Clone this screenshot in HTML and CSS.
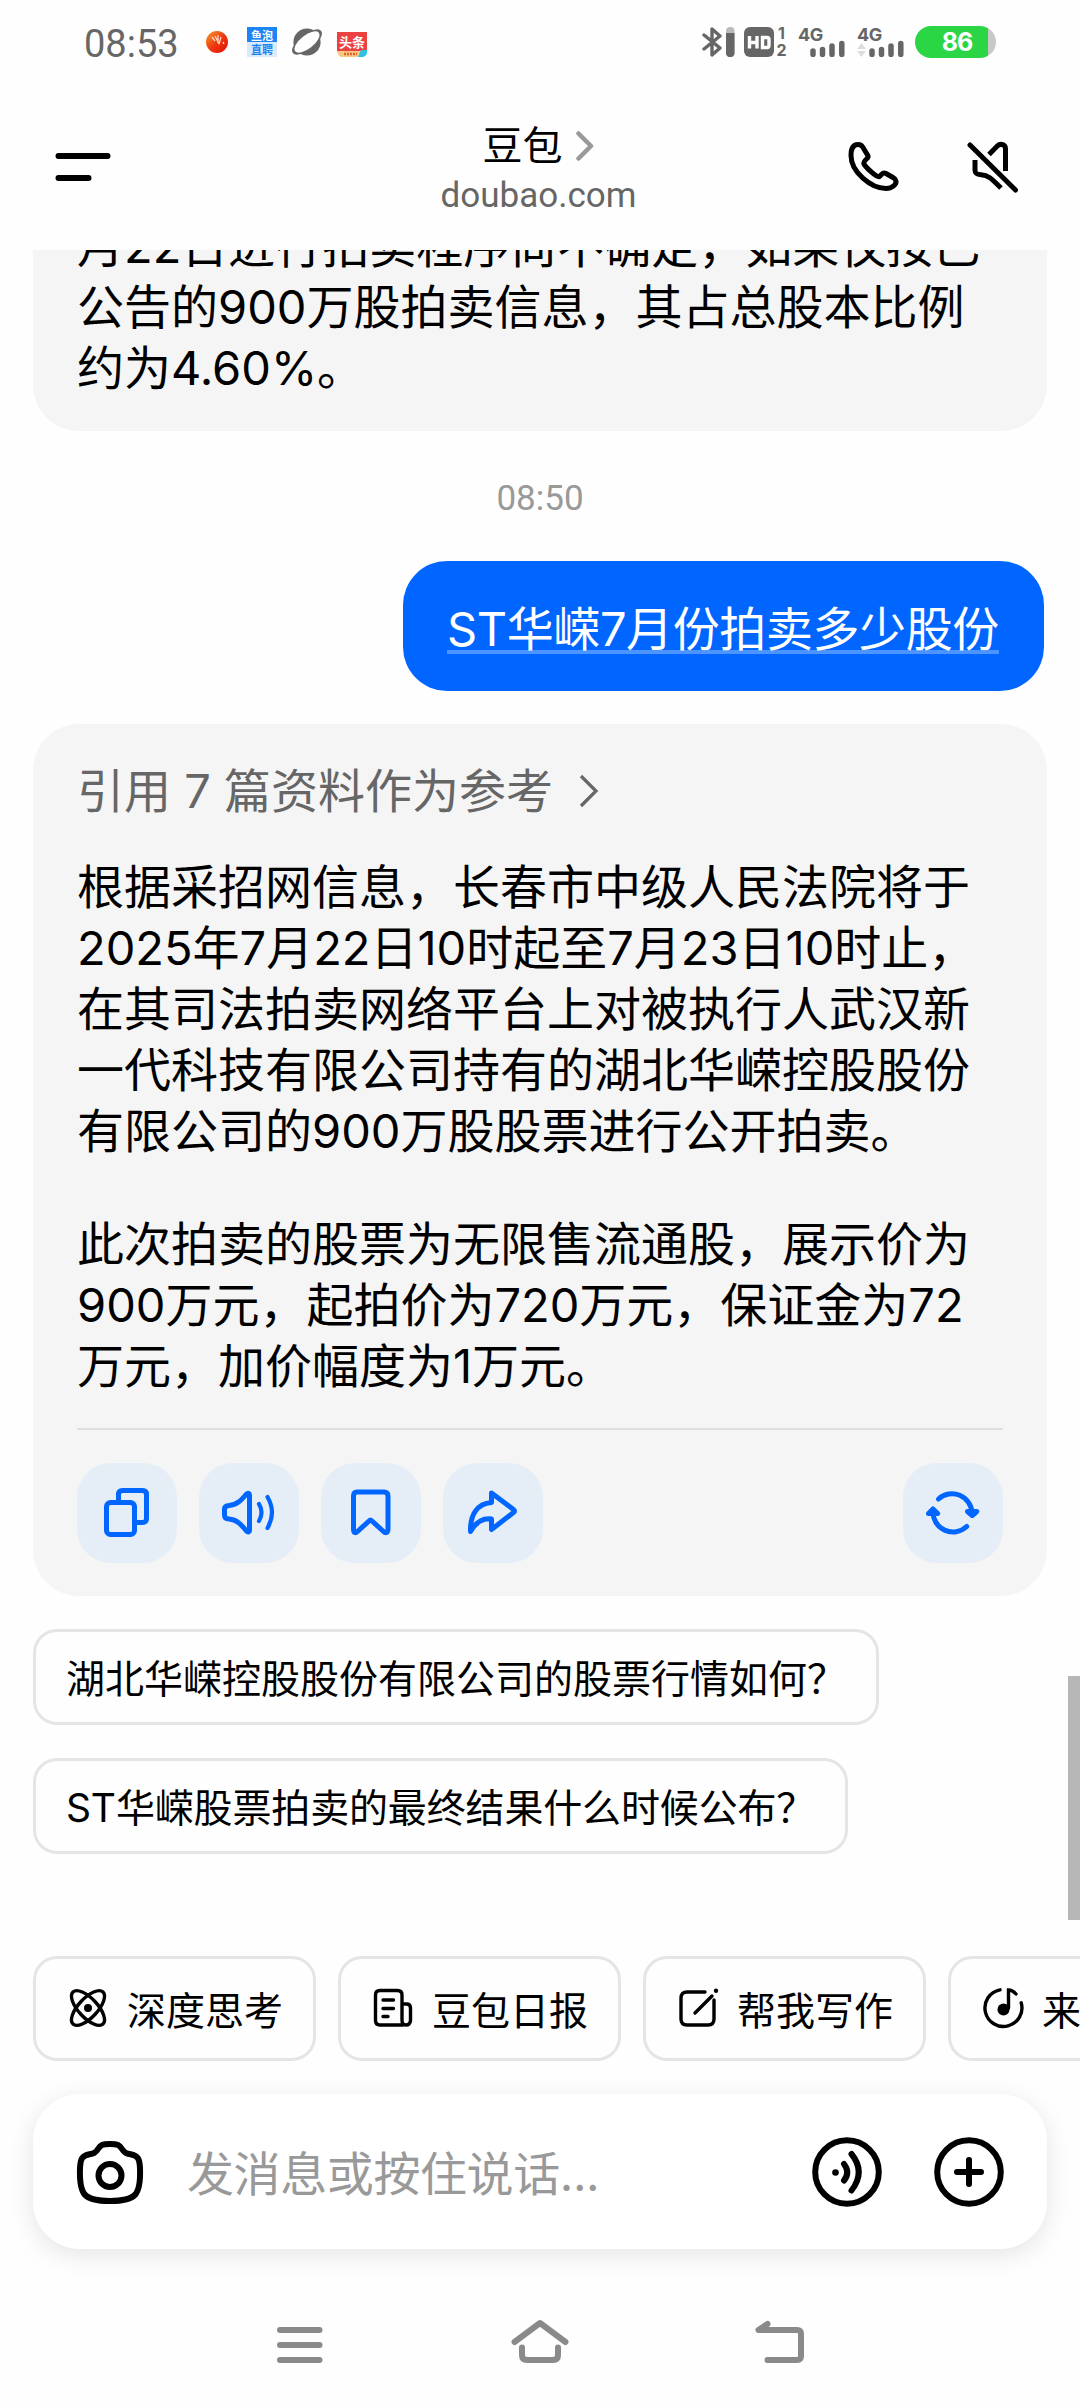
FILE: index.html
```html
<!DOCTYPE html>
<html lang="zh-CN">
<head>
    <meta charset="UTF-8">
    <meta name="viewport" content="width=device-width, initial-scale=1.0">
    <title>豆包</title>
    <link rel="stylesheet" href="styles.css">
</head>
<body>
    <div class="status-bar">
        <span class="clock">08:53</span>
        <div class="notices">
            <svg class="ball" width="22" height="22" viewBox="0 0 22 22">
                <defs>
                    <linearGradient id="ballFill" x1="0" y1="0" x2="1" y2="1">
                        <stop offset="0" stop-color="#f6a030"/>
                        <stop offset="0.5" stop-color="#ee3a10"/>
                        <stop offset="1" stop-color="#e60a00"/>
                    </linearGradient>
                </defs>
                <circle cx="11" cy="11" r="11" fill="url(#ballFill)"/>
                <path d="M6 6l3 4M9 5l4 8M12 4v8M15 6l-2 7M17 11l1 2" stroke="#ffd9c0" stroke-width="1.3"/>
            </svg>
            <svg class="yupao" width="30" height="30" viewBox="0 0 30 30">
                <rect width="30" height="15" fill="#1d84f3"/>
                <rect y="15" width="30" height="15" fill="#dbeafb"/>
                <text x="15" y="12.5" text-anchor="middle" font-size="11" font-weight="bold" fill="#fff">鱼泡</text>
                <text x="15" y="27" text-anchor="middle" font-size="11" font-weight="bold" fill="#1d84f3">直聘</text>
            </svg>
            <svg class="planet" width="30" height="28" viewBox="0 0 30 28">
                <circle cx="15" cy="14" r="13.6" fill="#666"/>
                <ellipse cx="15" cy="14" rx="18" ry="7.6" transform="rotate(-38 15 14)" fill="#666"/>
                <ellipse cx="15" cy="14" rx="15" ry="6.6" transform="rotate(-38 15 14)" fill="#fefefe"/>
            </svg>
            <svg class="toutiao" width="30" height="25" viewBox="0 0 30 25">
                <rect width="30" height="19" fill="#ec4141"/>
                <path d="M0 19h24l-2 6H4q-3-1-4-6z" fill="#f9c784"/>
                <path d="M24 18h6v3q-1 4-5 4h-4z" fill="#2cc3e0"/>
                <text x="15" y="14.5" text-anchor="middle" font-size="13" font-weight="bold" fill="#fff">头条</text>
                <path d="M7 22h13" stroke="#e0662e" stroke-width="2.4" stroke-dasharray="2 1"/>
            </svg>
        </div>
        <div class="system">
            <svg width="33" height="30" viewBox="0 0 33 30">
                <path d="M2 8l16 13-8 7V2l8 7L2 22" fill="none" stroke="#666" stroke-width="3.4" stroke-linejoin="round" stroke-linecap="round"/>
                <rect x="24" y="0" width="8.5" height="30" rx="4" fill="#bbb"/>
                <path d="M24 6h8.500v20a4 4 0 0 1-8.500 0z" fill="#666"/>
            </svg>
            <svg class="hd" width="30" height="30" viewBox="0 0 30 30">
                <rect width="30" height="30" rx="6" fill="#666"/>
                <path d="M5.500 9v12.500M13 9v12.500M5.500 15.500H13M18.500 10.500h4.500q2 0 2 2v6q0 2-2 2h-4.500z" fill="none" stroke="#fefefe" stroke-width="3.400"/>
            </svg>
            <div class="sims"><span>1</span><span>2</span></div>
            <div class="signal">
                <span>4G</span>
                <svg width="48" height="30" viewBox="0 0 48 30">
                    <path d="M15 24v3.500M24.500 22.500v5M34 19v8.500M43.800 16.500v11" stroke="#666" stroke-width="5.500" stroke-linecap="round"/>
                </svg>
            </div>
            <div class="signal">
                <span>4G</span>
                <svg width="48" height="30" viewBox="0 0 48 30">
                    <path d="M0 22l4.500-6 4.500 6zM0 24l4.500 6 4.500-6z" fill="#ddd"/>
                    <path d="M15 24v3.500M24.500 22.500v5M34 19v8.500M43.800 16.500v11" stroke="#666" stroke-width="5.500" stroke-linecap="round"/>
                </svg>
            </div>
            <div class="battery">86</div>
        </div>
    </div>

    <header>
        <svg class="menu" width="56" height="30" viewBox="0 0 56 30">
            <path d="M3.500 4h49M3.500 26h30" stroke="#000" stroke-width="6" stroke-linecap="round"/>
        </svg>
        <div class="title">
            <h1>豆包
                <svg width="18" height="30" viewBox="0 0 18 30">
                    <path d="M2.500 2.500L15 15 2.500 27.500" fill="none" stroke="#999" stroke-width="4.500" stroke-linecap="round" stroke-linejoin="round"/>
                </svg>
            </h1>
            <p>doubao.com</p>
        </div>
        <div class="tools">
            <svg width="60" height="60" viewBox="0 0 60 60">
                <path d="M14 7.500C8 7.500 7 14 7 18.500C7 35 27 51.500 42 51.500C49 51.500 53.500 46.500 51.500 43C51 41.500 50 41 49 40.500L42 36.500C40.500 35.700 39 35.900 38 37L35.500 39.500C33 41.500 20.500 29 19.800 26.500C19.500 25 22 22.500 23.500 21C24.300 20 24.200 19 23.500 18L19 10.500C18 8.500 16 7.500 14 7.500z" fill="none" stroke="#000" stroke-width="5" stroke-linejoin="round"/>
            </svg>
            <svg width="60" height="60" viewBox="0 0 60 60">
                <path d="M8 8l45.500 45" stroke="#000" stroke-width="5" stroke-linecap="round"/>
                <path d="M27 17.500l8-8.300c4-3.500 8.500-1.500 8.500 2.800v22M13 23v10c0 4 2.500 4.500 6 4.700 7 .3 10 3.300 20 13.300" fill="none" stroke="#000" stroke-width="5"/>
            </svg>
        </div>
    </header>

    <main class="chat">
        <div class="answer">
            <p class="text">月22日进行拍卖程序尚不确定，如果仅按已<br>公告的900万股拍卖信息，其占总股本比例<br>约为4.60%。</p>
        </div>
        <p class="time">08:50</p>
        <div class="question"><span>ST华嵘7月份拍卖多少股份</span></div>
        <div class="answer">
            <p class="source">引用 7 篇资料作为参考
                <svg width="20" height="34" viewBox="0 0 20 34">
                    <path d="M2 2l15 15L2 32" fill="none" stroke="#666" stroke-width="3.200"/>
                </svg>
            </p>
            <p class="text">根据采招网信息，长春市中级人民法院将于<br>2025年7月22日10时起至7月23日10时止，<br>在其司法拍卖网络平台上对被执行人武汉新<br>一代科技有限公司持有的湖北华嵘控股股份<br>有限公司的900万股股票进行公开拍卖。</p>
            <p class="text">此次拍卖的股票为无限售流通股，展示价为<br>900万元，起拍价为720万元，保证金为72<br>万元，加价幅度为1万元。</p>
            <div class="actions">
                <button>
                    <svg viewBox="0 0 100 100">
                        <rect x="29.500" y="39.500" width="28" height="32" rx="4"/>
                        <path d="M41.500 38v-6.500q0-4 4-4h20q4 0 4 4v24q0 4-4 4h-7"/>
                    </svg>
                </button>
                <button>
                    <svg viewBox="0 0 100 100">
                        <path d="M30 42.500c8-.5 12.500-5.500 17.500-11.500 1.500-1.500 3-.8 3 1v35c0 2-1.500 2.500-3 1C42.500 62 38 56.500 30 56c-3 0-4.500-1.500-4.500-4v-5.500c0-2.500 1.500-4 4.500-4z"/>
                        <path class="thin" d="M60 41q5 8.500 0 17M68.500 34q9 15.500 0 31"/>
                    </svg>
                </button>
                <button>
                    <svg viewBox="0 0 100 100">
                        <path d="M36 29h27q4 0 4 4v33c0 4-2.500 4.500-4.500 2.500L51 58q-1.500-1.500-3 0L36.500 68.500c-2 2-4 1.500-4-2.500V33q0-4 3.500-4z"/>
                    </svg>
                </button>
                <button>
                    <svg viewBox="0 0 100 100">
                        <path d="M48.500 30l22 16.500q2 1.500 0 3L48.500 66.500V56q-13-1.500-21 12.500C27 52 34 40.500 48.500 39.500z"/>
                    </svg>
                </button>
                <button class="refresh">
                    <svg viewBox="0 0 100 100">
                        <path d="M35.500 36A20 20 0 0 1 69 50M63.700 63.500A20 20 0 0 1 30 48"/>
                        <path d="M64.500 48.500l4.700 4 4.600-4zM25.500 50.500l4.500-4.500 4.700 4.500z"/>
                    </svg>
                </button>
            </div>
        </div>
        <button class="suggest">湖北华嵘控股股份有限公司的股票行情如何？</button>
        <button class="suggest second">ST华嵘股票拍卖的最终结果什么时候公布？</button>
    </main>

    <div class="skills">
        <button>
            <svg viewBox="0 0 40 40">
                <ellipse cx="20" cy="20" rx="22" ry="9.500" transform="rotate(47 20 20)"/>
                <ellipse cx="20" cy="20" rx="22" ry="9.500" transform="rotate(-47 20 20)"/>
                <circle class="solid" cx="20" cy="20" r="4"/>
            </svg>
            深度思考
        </button>
        <button>
            <svg viewBox="0 0 40 40">
                <path d="M30 37H7q-4.500 0-4.500-4.500V7Q2.500 2.500 7 2.500h17.500q4.500 0 4.500 4.500v25.500q0 4.500 4 4.500t4.500-4.500V20q0-4-4-4H29M10 12h10.500M10 20.500h10.500M10 28.500h5"/>
            </svg>
            豆包日报
        </button>
        <button>
            <svg viewBox="0 0 40 40">
                <path d="M27 4H9Q3 4 3 10v21q0 6 6 6h21q6 0 6-6V12M17 25L34 8"/>
                <circle class="solid" cx="38" cy="2.800" r="2.200"/>
            </svg>
            帮我写作
        </button>
        <button class="cut">
            <svg viewBox="0 0 40 40">
                <path d="M17 1.800a18.500 18.500 0 1 0 21.200 13M25.500 20V2q4 0 7.500 4"/>
                <circle class="solid" cx="20.500" cy="21.500" r="6"/>
            </svg>
            来
        </button>
    </div>

    <div class="input-bar">
        <svg width="68" height="64" viewBox="0 0 68 64">
            <path d="M34 4c8 0 9.500 1 12 5 2.500 4 4.500 4.500 8.500 5.200 7.500 1.300 9 4.800 9.500 13.800 1 27-4 33-30 33S3 55 4 28c.5-9 2-12.500 9.500-13.800 4-.7 6-1.200 8.500-5.200C24.500 5 26 4 34 4z"/>
            <circle cx="34" cy="35.500" r="11.500"/>
        </svg>
        <span class="placeholder">发消息或按住说话...</span>
        <svg class="voice" width="70" height="70" viewBox="0 0 70 70">
            <circle cx="35" cy="35" r="31.800"/>
            <circle class="solid" cx="23.500" cy="35.500" r="3.300"/>
            <path d="M32 27q6.500 8.500 0 16.500M39.500 17q14.500 18 0 36.500"/>
        </svg>
        <svg width="70" height="70" viewBox="0 0 70 70">
            <circle cx="35" cy="35" r="31.800"/>
            <path d="M35 23v24M23 35h24"/>
        </svg>
    </div>

    <nav>
        <svg width="60" height="50" viewBox="0 0 60 50">
            <path d="M10 12h39.500M10 27h39.500M10 42h39.500"/>
        </svg>
        <svg width="60" height="50" viewBox="0 0 60 50">
            <path d="M4.500 24L30 5l25.500 19M12 29.500V37q0 5 5 5h26q5 0 5-5v-7.500"/>
        </svg>
        <svg width="60" height="50" viewBox="0 0 60 50">
            <path d="M17.500 6L8.500 12H47q4 0 4 4v22q0 4-4 4H17.500"/>
        </svg>
    </nav>

    <div class="scrollbar"></div>
</body>
</html>
```
FILE: styles.css
```css
*{
    margin: 0;
    padding: 0;
    box-sizing: border-box;
}
body{
    position: relative;
    display: flex;
    flex-direction: column;
    width: 1080px;
    height: 2408px;
    overflow: hidden;
    background-color: #fefefe;
    color: #000;
    font-family: "Inter", "Noto Sans CJK SC", sans-serif;
}
svg{
    display: block;
    flex-shrink: 0;
}
button{
    font: inherit;
    color: inherit;
    border: none;
    background: none;
}

/* status bar */
.status-bar{
    height: 84px;
    display: flex;
    align-items: center;
    padding: 0 84px 0 84px;
}
.clock{
    font-family: "Roboto", sans-serif;
    font-size: 38px;
    color: #666;
    width: 122px;
    padding-top: 4px;
}
.notices{
    display: flex;
    align-items: center;
}
.notices svg{
    overflow: visible;
}
.yupao{
    margin-left: 19px;
}
.planet{
    margin-left: 15px;
}
.toutiao{
    margin-left: 15px;
    margin-top: 5px;
}
.system{
    display: flex;
    align-items: center;
    margin-left: auto;
}
.hd{
    margin-left: 9px;
}
.sims{
    display: flex;
    flex-direction: column;
    align-items: center;
    width: 11px;
    margin-left: 2px;
    color: #666;
    font-size: 16px;
    font-weight: bold;
    line-height: 17px;
}
.signal{
    display: grid;
    margin-left: 11px;
}
.signal span, .signal svg{
    grid-area: 1 / 1;
}
.signal span{
    color: #666;
    font-size: 18px;
    font-weight: bold;
    line-height: 16px;
    letter-spacing: -0.5px;
}
.battery{
    width: 81px;
    height: 32px;
    margin-left: 10px;
    border-radius: 16px;
    background: linear-gradient(to right, #2bd645 73px, #c8c8c8 73px);
    color: #fff;
    font-size: 25px;
    font-weight: bold;
    line-height: 32px;
    letter-spacing: -1px;
    text-align: center;
    padding-left: 3px;
}

/* header */
header{
    height: 166px;
    display: grid;
    grid-template-columns: 1fr auto 1fr;
    padding: 0 58px 0 55px;
}
.menu{
    margin-top: 68px;
}
.title{
    display: flex;
    flex-direction: column;
    align-items: center;
    padding-top: 37px;
}
h1{
    display: flex;
    align-items: center;
    gap: 14px;
    font-size: 40px;
    font-weight: 400;
    line-height: 50px;
}
.title p{
    font-family: "Roboto", sans-serif;
    font-size: 35px;
    line-height: 50px;
    color: #666;
}
.tools{
    display: flex;
    justify-content: flex-end;
    gap: 58px;
    margin-top: 53px;
}

/* messages */
.chat{
    height: 1706px;
    display: flex;
    flex-direction: column;
    justify-content: flex-end;
    align-items: flex-start;
    overflow: hidden;
    padding: 0 33px 102px;
    flex-shrink: 0;
}
.answer{
    width: 1014px;
    flex-shrink: 0;
    background-color: #f5f5f5;
    border-radius: 46px;
    padding: 36px 44px 33px;
}
.text{
    font-size: 47px;
    line-height: 61px;
    white-space: nowrap;
}
.text + .text{
    margin-top: 52px;
}
.time{
    align-self: center;
    flex-shrink: 0;
    margin-top: 45px;
    height: 85px;
    font-family: "Roboto", sans-serif;
    font-size: 35px;
    line-height: 46px;
    color: #999;
}
.question{
    align-self: flex-end;
    width: 641px;
    height: 130px;
    flex-shrink: 0;
    margin: 0 3px 33px 0;
    padding: 37px 44px;
    border-radius: 44px;
    background-color: #0066ff;
    color: #fff;
    font-size: 47px;
    line-height: 61px;
    letter-spacing: -0.4px;
    white-space: nowrap;
}
.question span{
    text-decoration: underline 4px rgba(255, 255, 255, 0.3);
    text-underline-offset: 4px;
    text-decoration-skip-ink: none;
}
.source{
    display: flex;
    align-items: center;
    gap: 26px;
    margin-bottom: 35px;
    font-size: 47px;
    line-height: 61px;
    color: #666;
}
.actions{
    display: flex;
    gap: 22px;
    margin-top: 32px;
    padding-top: 33px;
    border-top: 2px solid #dedede;
}
.actions button{
    width: 100px;
    height: 100px;
    border-radius: 34px;
    background-color: #e5edf7;
}
.actions svg{
    fill: none;
    stroke: #0066ff;
    stroke-width: 5;
    stroke-linecap: round;
    stroke-linejoin: round;
}
.actions .thin{
    stroke-width: 4.2;
}
.actions .refresh{
    margin-left: auto;
}
.suggest{
    height: 96px;
    flex-shrink: 0;
    margin-top: 33px;
    padding: 0 30px 2px;
    border: 3px solid #e5e5e5;
    border-radius: 24px;
    font-size: 39px;
    white-space: nowrap;
}
.second{
    letter-spacing: -0.15px;
}

/* shortcuts above the input */
.skills{
    display: flex;
    gap: 22px;
    width: 1080px;
    overflow: hidden;
    padding-left: 33px;
    height: 105px;
    flex-shrink: 0;
}
.skills button{
    display: flex;
    align-items: center;
    gap: 19px;
    width: 283px;
    flex-shrink: 0;
    padding: 0 0 2px 32px;
    border: 3px solid #e5e5e5;
    border-radius: 24px;
    font-size: 39px;
    white-space: nowrap;
}
/* last one runs off the right edge */
.skills .cut{
    width: 132px;
    border-right: none;
    border-radius: 24px 0 0 24px;
}
.skills svg{
    width: 40px;
    height: 40px;
    overflow: visible;
    fill: none;
    stroke: #000;
    stroke-width: 3.4;
    stroke-linecap: round;
}
.skills .solid, .input-bar .solid{
    fill: #000;
    stroke: none;
}
.input-bar{
    display: flex;
    align-items: center;
    width: 1014px;
    height: 155px;
    flex-shrink: 0;
    margin: 33px 33px 0;
    padding: 0 43px;
    border-radius: 47px;
    background-color: #fff;
    box-shadow: 0 6px 26px rgba(0, 0, 0, 0.1);
}
.input-bar svg{
    fill: none;
    stroke: #000;
    stroke-width: 6;
    stroke-linecap: round;
}
.placeholder{
    margin-left: 43px;
    padding-top: 4px;
    font-size: 47px;
    line-height: 61px;
    letter-spacing: -0.4px;
    color: #999;
}
.input-bar .voice{
    margin: 0 52px 0 auto;
}

/* system navigation */
nav{
    display: flex;
    gap: 180px;
    padding: 69px 0 0 270px;
}
nav svg{
    fill: none;
    stroke: #8a8a8a;
    stroke-width: 6;
    stroke-linecap: round;
    stroke-linejoin: round;
}
.scrollbar{
    position: absolute;
    top: 1676px;
    right: 0;
    width: 12px;
    height: 244px;
    background-color: #b7b7b7;
}
```
